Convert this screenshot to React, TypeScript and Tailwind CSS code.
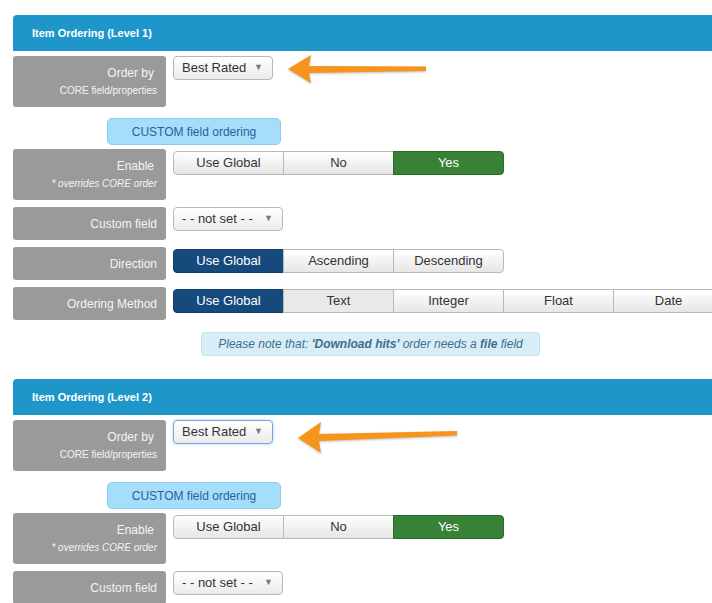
import React from "react";

type Seg = { label: string; tone?: "green" | "blue" | "flat" };

function Label({ title, sub, tall }: { title: string; sub?: string; tall?: boolean }) {
  if (tall) {
    return (
      <div className="w-[153px] h-[51px] shrink-0 rounded-[3px] bg-[#9a9a9a] pt-[8px] pr-[9px] text-right text-[#f4f4f4]">
        <div className="pr-[3px] text-[12px] leading-[18px]">{title}</div>
        <div className={"text-[10px] leading-[18px] " + (sub?.startsWith("*") ? "italic" : "")}>{sub}</div>
      </div>
    );
  }
  return (
    <div className="w-[153px] h-[33px] shrink-0 rounded-[3px] bg-[#9a9a9a] pr-[9px] flex items-center justify-end text-[12px] text-[#f4f4f4]">
      {title}
    </div>
  );
}

function Select({ value, wide, focus }: { value: string; wide?: boolean; focus?: boolean }) {
  return (
    <div
      className={
        "h-[24px] rounded-[4px] border bg-gradient-to-b from-white to-[#ebebeb] pl-[8px] pr-[9px] flex items-center justify-between text-[13px] text-[#333] " +
        (wide ? "w-[110px] " : "w-[100px] ") +
        (focus ? "border-[#6fa8e3] shadow-[0_0_3px_rgba(80,150,230,0.5)]" : "border-[#b8b8b8]")
      }
    >
      <span>{value}</span>
      <span className="text-[9px] text-[#7a7a7a]">▼</span>
    </div>
  );
}

function Group({ items }: { items: Seg[] }) {
  return (
    <div className="mt-[2px] flex">
      {items.map((s, i) => {
        let tone = "bg-gradient-to-b from-white to-[#e6e6e6] border-[#b9b9b9] text-[#333]";
        if (s.tone === "green") tone = "bg-[#378237] border-[#2a6a2a] text-white";
        if (s.tone === "blue") tone = "bg-[#164a7d] border-[#123e6a] text-white";
        if (s.tone === "flat") tone = "bg-[#e9e9e9] border-[#b9b9b9] text-[#333]";
        const first = i === 0 ? "rounded-l-[4px]" : "-ml-px";
        const last = i === items.length - 1 ? "rounded-r-[4px]" : "";
        return (
          <div
            key={s.label}
            className={`w-[111px] h-[24px] shrink-0 border flex items-center justify-center text-[13px] ${tone} ${first} ${last}`}
          >
            {s.label}
          </div>
        );
      })}
    </div>
  );
}

function Arrow({ className, d, w, h }: { className: string; d: string; w: number; h: number }) {
  return (
    <svg
      className={"absolute " + className}
      width={w}
      height={h}
      viewBox={`0 0 ${w} ${h}`}
      style={{ filter: "drop-shadow(0 1px 1px rgba(0,0,0,0.25))" }}
    >
      <path d={d} fill="#f7941e" />
    </svg>
  );
}

function Section({ level, arrow, focus, full }: { level: number; arrow: React.ReactNode; focus?: boolean; full?: boolean }) {
  return (
    <div>
      <div className="h-[36px] rounded-tl-[4px] bg-[#1f96c9] pl-[19px] flex items-center text-[11px] font-bold text-white">
        Item Ordering (Level {level})
      </div>

      <div className="relative mt-[5px] flex gap-[7px]">
        <Label title="Order by" sub="CORE field/properties" tall />
        <Select value="Best Rated" focus={focus} />
        {arrow}
      </div>

      <div className="mt-[11px] ml-[94px] w-[174px] h-[27px] rounded-[5px] border border-[#86cdee] bg-[#a5defa] flex items-center justify-center text-[12px] text-[#2f5d9b]">
        CUSTOM field ordering
      </div>

      <div className="mt-[4px] flex gap-[7px]">
        <Label title="Enable" sub="* overrides CORE order" tall />
        <Group items={[{ label: "Use Global" }, { label: "No" }, { label: "Yes", tone: "green" }]} />
      </div>

      <div className="mt-[7px] flex gap-[7px]">
        <Label title="Custom field" />
        <Select value="- - not set - -" wide />
      </div>

      {full && (
        <>
          <div className="mt-[7px] flex gap-[7px]">
            <Label title="Direction" />
            <Group items={[{ label: "Use Global", tone: "blue" }, { label: "Ascending" }, { label: "Descending" }]} />
          </div>

          <div className="mt-[7px] flex gap-[7px]">
            <Label title="Ordering Method" />
            <Group
              items={[
                { label: "Use Global", tone: "blue" },
                { label: "Text", tone: "flat" },
                { label: "Integer" },
                { label: "Float" },
                { label: "Date" },
              ]}
            />
          </div>

          <div className="mt-[12px] ml-[188px] w-[339px] h-[24px] rounded-[4px] border border-[#bfe3f1] bg-[#d9edf7] flex items-center justify-center text-[12px] italic text-[#3d6f8e]">
            <span>
              Please note that: <b>'Download hits'</b> order needs a <b>file</b> field
            </span>
          </div>
        </>
      )}
    </div>
  );
}

export default function App() {
  return (
    <div className="w-[712px] h-[603px] overflow-hidden bg-white font-['Liberation_Sans',Arial,sans-serif]">
      <div className="pl-[13px] pt-[15px] w-[760px]">
        <Section
          level={1}
          full
          arrow={
            <Arrow
              className="left-[272px] -top-[2px]"
              w={145}
              h={32}
              d="M3 15 L26 1 L24 12 L141 12.5 L141 17 L24 19 L26 29 Z"
            />
          }
        />
        <div className="mt-[23px]">
          <Section
            level={2}
            focus
            arrow={
              <Arrow
                className="left-[282px] top-[0px]"
                w={166}
                h={36}
                d="M3 18 L26 2 L24 14 L162 11 L162 15.5 L24 21 L26 33 Z"
              />
            }
          />
        </div>
      </div>
    </div>
  );
}
